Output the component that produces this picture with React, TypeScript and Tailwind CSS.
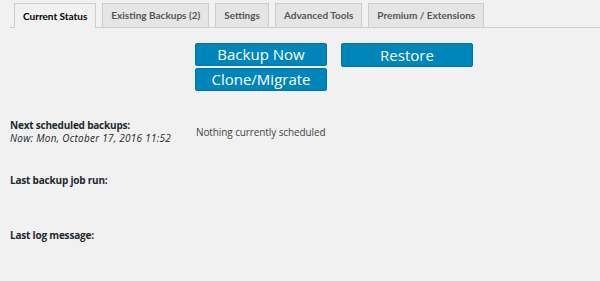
const tabs = [
  { label: "Current Status", active: true },
  { label: "Existing Backups (2)", active: false },
  { label: "Settings", active: false },
  { label: "Advanced Tools", active: false },
  { label: "Premium / Extensions", active: false },
];

const font = { fontFamily: "'Open Sans', 'Noto Sans', sans-serif" };
const tabFont = { fontFamily: "Lato, 'Open Sans', sans-serif" };

function StatusRow({ label, sub, value }: { label: string; sub?: string; value?: string }) {
  return (
    <div className="flex items-start h-[55px]">
      <div className="w-[186px] shrink-0 text-[10px] leading-[13px] text-[#23282d]">
        <div className="font-bold tracking-[-0.2px]">{label}</div>
        {sub && <div className="italic tracking-[0.25px]">{sub}</div>}
      </div>
      {value && <div className="text-[10px] leading-[13px] text-[#444] pt-[7px] tracking-[-0.1px]">{value}</div>}
    </div>
  );
}

export default function App() {
  return (
    <div className="w-[600px] h-[281px] bg-[#f1f1f1] overflow-hidden" style={font}>
      {/* Tabs */}
      <div className="ml-[10px] pt-[3px] flex items-end gap-[6px] pl-[4px] border-b border-[#ccc]" style={tabFont}>
        {tabs.map((t) => (
          <div
            key={t.label}
            className={
              t.active
                ? "h-[25px] px-[8px] flex items-center border border-b-0 border-[#ccc] bg-[#f1f1f1] text-[10px] font-bold text-black -mb-px"
                : "h-[24px] px-[8px] flex items-center border border-b-0 border-[#ccc] bg-[#e5e5e5] text-[10px] font-bold text-[#555]"
            }
          >
            {t.label}
          </div>
        ))}
      </div>

      {/* Action buttons */}
      <div className="flex gap-[14px] ml-[195px] mt-[15px]">
        <div className="flex flex-col gap-[2px]">
          <button className="w-[132px] h-[23px] bg-[#0085ba] border border-[#0073aa] rounded-[2px] text-white text-[15px] leading-none">
            Backup Now
          </button>
          <button className="w-[132px] h-[23px] bg-[#0085ba] border border-[#0073aa] rounded-[2px] text-white text-[15px] leading-none">
            Clone/Migrate
          </button>
        </div>
        <button className="w-[132px] h-[24px] bg-[#0085ba] border border-[#0073aa] rounded-[2px] text-white text-[15px] leading-none">
          Restore
        </button>
      </div>

      {/* Status */}
      <div className="ml-[10px] mt-[28px]">
        <StatusRow label="Next scheduled backups:" sub="Now: Mon, October 17, 2016 11:52" value="Nothing currently scheduled" />
        <StatusRow label="Last backup job run:" />
        <StatusRow label="Last log message:" />
      </div>
    </div>
  );
}
